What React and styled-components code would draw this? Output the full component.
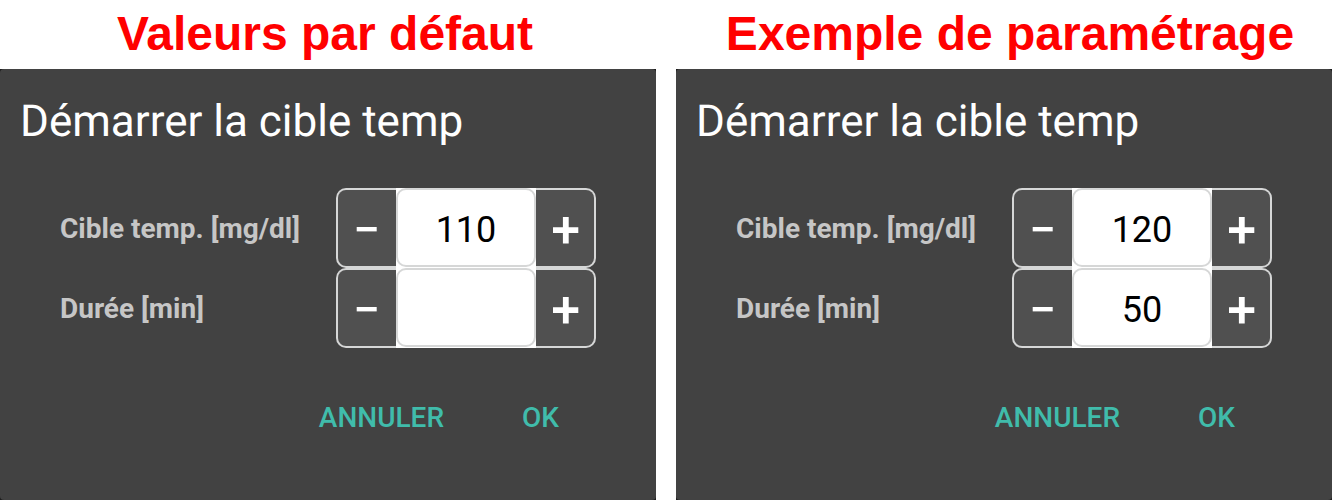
import React, { useId, useState } from "react"
import styled, { createGlobalStyle } from "styled-components"

const GlobalStyle = createGlobalStyle`
  * {
    box-sizing: border-box;
  }

  body {
    margin: 0;
    background: #fff;
    font-family: Roboto, sans-serif;
  }
`

const Page = styled.main`
  display: grid;
  grid-template-columns: 1fr 1fr;
  column-gap: 20px;
  min-height: 100vh;
`

const Column = styled.section`
  display: flex;
  flex-direction: column;
`

const Caption = styled.h1`
  margin: 0;
  padding: ${props => (props.$shift === "right" ? "0 0 0 12px" : "0 6px 0 0")};
  height: 69px;
  color: #f00;
  font: bold 48px/68px "Liberation Sans", Arial, sans-serif;
  text-align: center;
  white-space: nowrap;
`

const Backdrop = styled.div`
  flex: 1;
  display: flex;
  background: #1c1c1c;
`

const Dialog = styled.form`
  flex: 1;
  display: flex;
  flex-direction: column;
  padding: 20px;
  border-radius: 4px;
  background: #424242;
`

const Title = styled.h2`
  margin: 0;
  color: #fff;
  font-size: 44px;
  font-weight: 400;
  line-height: 64px;
  text-rendering: geometricPrecision;
`

const Fields = styled.div`
  padding: 35px 40px 0;
`

const Field = styled.div`
  display: flex;
  align-items: center;
  justify-content: space-between;
  height: 80px;
`

const Label = styled.label`
  padding-top: 2px;
  color: #c6c6c6;
  font-size: 28px;
  font-weight: 700;
  line-height: 32px;
`

const Stepper = styled.div`
  display: flex;
  width: 260px;
  height: 80px;
`

const StepButton = styled.button`
  flex: 1;
  display: flex;
  align-items: center;
  justify-content: center;
  padding: 4px 0 0;
  border: 2px solid #d6d7d7;
  background: #505050;
  color: #fff;

  &:first-child {
    border-right: 0;
    border-radius: 10px 0 0 10px;
  }

  &:last-child {
    border-left: 0;
    border-radius: 0 10px 10px 0;
  }
`

const ValueCell = styled.div`
  display: flex;
  width: 140px;
  padding-bottom: 1px;
  background: #fff;
`

const Value = styled.input`
  width: 100%;
  padding: 4px 0 0;
  border: 2px solid #d6d7d7;
  border-radius: 10px;
  background: #fff;
  color: #000;
  font: 400 36px Roboto, sans-serif;
  text-align: center;
`

const Actions = styled.div`
  display: flex;
  justify-content: flex-end;
  gap: 78px;
  padding: 52px 77px 0 0;
`

const Action = styled.button`
  padding: 0;
  border: 0;
  background: transparent;
  color: #40bcab;
  font: 500 28px/36px Roboto, sans-serif;
  text-transform: uppercase;
`

const MinusIcon = () => (
  <svg width="28" height="28" viewBox="0 0 28 28" aria-hidden="true">
    <path d="M3.7 13.2H23.7" stroke="currentColor" strokeWidth="4.4" />
  </svg>
)

const PlusIcon = () => (
  <svg width="28" height="28" viewBox="0 0 28 28" aria-hidden="true">
    <path d="M2 14.2H27.3M14.8 1V27.6" stroke="currentColor" strokeWidth="5.8" />
  </svg>
)

const NumberField = ({ label, initial, step }) => {
  const id = useId()
  const [value, setValue] = useState(initial)
  const change = delta => setValue(String(Math.max(0, Number(value) + delta)))

  return (
    <Field>
      <Label htmlFor={id}>{label}</Label>
      <Stepper>
        <StepButton type="button" aria-label="Diminuer" onClick={() => change(-step)}>
          <MinusIcon />
        </StepButton>
        <ValueCell>
          <Value id={id} inputMode="numeric" value={value} onChange={e => setValue(e.target.value)} />
        </ValueCell>
        <StepButton type="button" aria-label="Augmenter" onClick={() => change(step)}>
          <PlusIcon />
        </StepButton>
      </Stepper>
    </Field>
  )
}

const TempTarget = ({ caption, shift, target, duration }) => (
  <Column>
    <Caption $shift={shift}>{caption}</Caption>
    <Backdrop>
      <Dialog onSubmit={e => e.preventDefault()}>
        <Title>Démarrer la cible temp</Title>
        <Fields>
          <NumberField label="Cible temp. [mg/dl]" initial={target} step={1} />
          <NumberField label="Durée [min]" initial={duration} step={10} />
        </Fields>
        <Actions>
          <Action type="button">Annuler</Action>
          <Action type="submit">OK</Action>
        </Actions>
      </Dialog>
    </Backdrop>
  </Column>
)

const App = () => (
  <>
    <GlobalStyle />
    <Page>
      <TempTarget caption="Valeurs par défaut" shift="left" target="110" duration="" />
      <TempTarget caption="Exemple de paramétrage" shift="right" target="120" duration="50" />
    </Page>
  </>
)

export default App
